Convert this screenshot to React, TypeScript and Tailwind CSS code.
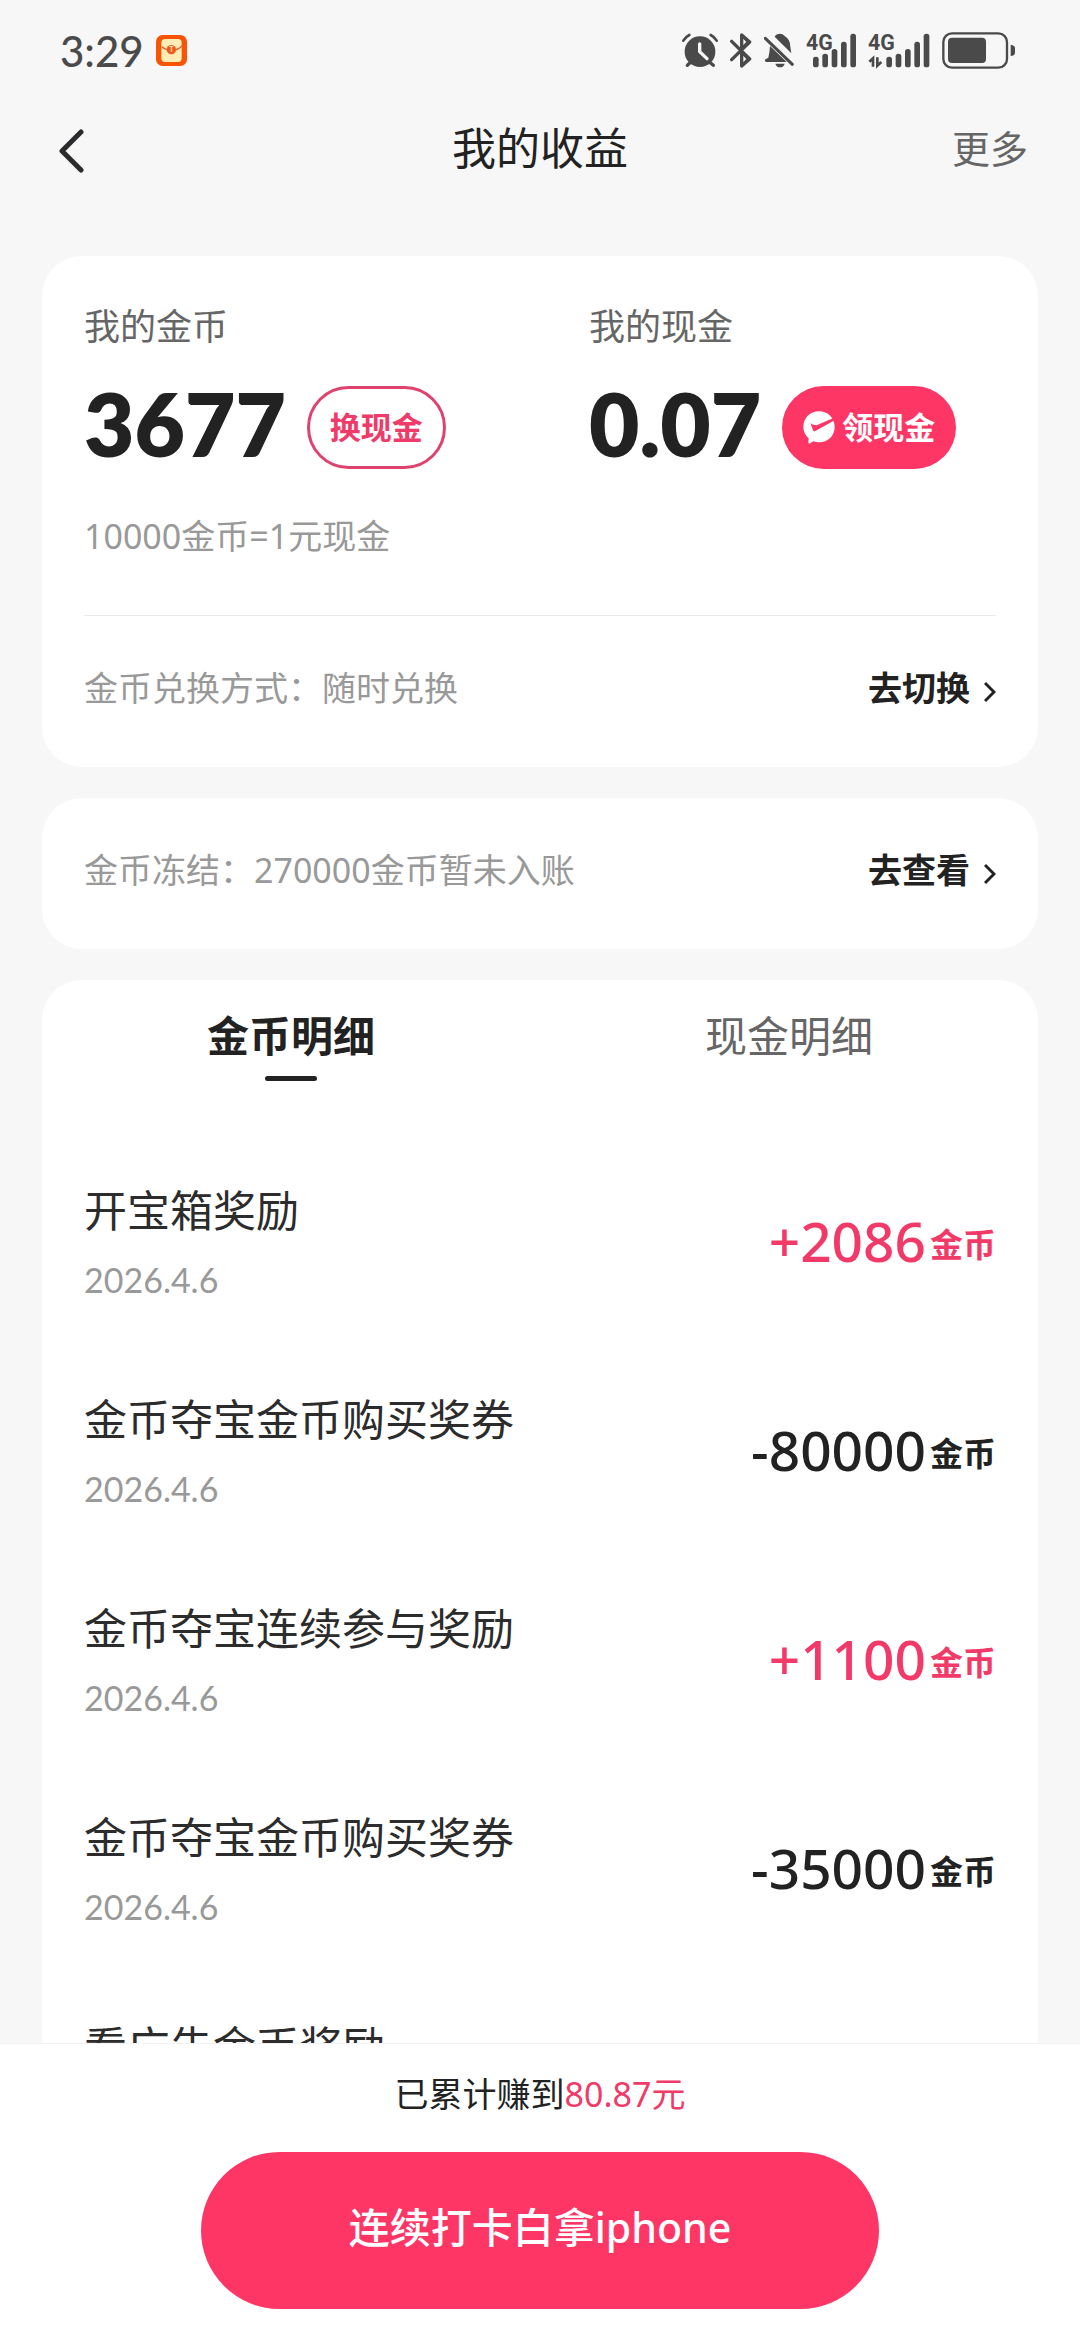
import React, { useState } from "react";

type Entry = { title: string; date?: string; amount?: string; gain?: boolean };

const ENTRIES: Entry[] = [
  { title: "开宝箱奖励", date: "2026.4.6", amount: "+2086", gain: true },
  { title: "金币夺宝金币购买奖券", date: "2026.4.6", amount: "-80000" },
  { title: "金币夺宝连续参与奖励", date: "2026.4.6", amount: "+1100", gain: true },
  { title: "金币夺宝金币购买奖券", date: "2026.4.6", amount: "-35000" },
  { title: "看广告金币奖励" },
];

const BAR_TOPS = [170, 161, 147, 125, 101];

function RedPacketIcon() {
  return (
    <svg className="h-[31px] w-[31px]" viewBox="465 105 93 93" aria-hidden="true">
      <rect x="465" y="105" width="93" height="93" rx="20" fill="#f95305" />
      <rect x="481" y="117" width="61" height="69" rx="11" fill="#ffedb5" />
      <path d="M482 140 Q496 151 511 151 Q530 151 544 137" fill="none" stroke="#e8602c" strokeWidth="4" />
      <circle cx="511" cy="149" r="14" fill="#ee5a1c" />
      <text x="511" y="157" textAnchor="middle" fontSize="22" fontWeight="700" fill="#ffedb5" fontFamily="Lato, sans-serif">
        T
      </text>
    </svg>
  );
}

function AlarmIcon() {
  return (
    <svg className="h-[37px] w-[36px]" viewBox="66 96 108 111" fill="none" stroke="#4a4a4a" strokeLinecap="round" aria-hidden="true">
      <circle cx="120" cy="155" r="46" fill="#4a4a4a" stroke="none" />
      <path d="M70 122 Q76 111 88 105 M152 105 Q164 111 170 122" strokeWidth="8" />
      <path d="M92 186 L82 196 M148 186 L160 196" strokeWidth="10" />
      <path d="M119 132 V155 L141 176" stroke="#f7f7f7" strokeWidth="10" strokeLinejoin="round" />
    </svg>
  );
}

function BluetoothIcon() {
  return (
    <svg className="h-[37px] w-[22px]" viewBox="210 96 66 111" fill="none" stroke="#4a4a4a" strokeWidth="10" strokeLinecap="round" strokeLinejoin="round" aria-hidden="true">
      <path d="M215 124 L269 177 L245 198 V105 L269 126 L215 179" />
      <path d="M250 112 L262 126 L250 138 M250 164 L262 177 L250 190" strokeWidth="5" />
    </svg>
  );
}

function MutedBellIcon() {
  return (
    <svg className="h-[37px] w-[30px]" viewBox="312 96 90 111" fill="#4a4a4a" aria-hidden="true">
      <path d="M330 138 L380 186 H318 Q312 183 316 178 L325 173 Q329 158 330 138 Z" />
      <path d="M344 110 Q348 101 360 101 Q368 101 374 108 Q391 118 391 140 L394 160 Z" />
      <path d="M346 191 H374 Q371 202 360 202 Q349 202 346 191 Z" />
      <path d="M316 115 L397 193" stroke="#4a4a4a" strokeWidth="9" strokeLinecap="round" />
    </svg>
  );
}

function SignalIcon({ active = false }: { active?: boolean }) {
  const start = active ? 63 : 29;
  return (
    <svg className={active ? "h-[37px] w-[62px] overflow-visible" : "h-[37px] w-[50px] overflow-visible"} viewBox={active ? "0 96 186 111" : "0 96 150 111"} aria-hidden="true">
      <text x="0" y="150" fontSize="64" fontWeight="700" fill="#4a4a4a" fontFamily="'Liberation Sans Narrow', Roboto, sans-serif">
        4G
      </text>
      {BAR_TOPS.map((top, i) => (
        <rect key={top} x={start - 8 + i * 28} y={top} width="17" height={202 - top} rx="8" fill="#4a4a4a" />
      ))}
      {active && <path d="M15 200 V175 L4 185 M28 172 V197 L40 186" fill="none" stroke="#4a4a4a" strokeWidth="8" />}
    </svg>
  );
}

function BatteryIcon() {
  return (
    <svg className="h-[37px] w-[73px]" viewBox="846 96 219 111" aria-hidden="true">
      <rect x="850" y="100" width="191" height="103" rx="26" fill="none" stroke="#4a4a4a" strokeWidth="7" />
      <rect x="864" y="113" width="114" height="76" rx="12" fill="#4a4a4a" />
      <path d="M1052 134 Q1065 136 1065 144 V158 Q1065 166 1052 168 Z" fill="#4a4a4a" />
    </svg>
  );
}

function WechatPayIcon() {
  return (
    <svg className="h-[33px] w-[33px]" viewBox="766 489 99 99" aria-hidden="true">
      <path d="M814 490 C841 490 861 510 861 537 C861 563 841 583 814 583 C808 583 802 582 797 580 L785 587 Q782 587 782 583 L783 571 C773 562 767 551 767 537 C767 510 787 490 814 490 Z" fill="#fff" />
      <path d="M788 525 Q794 531 801 531 L807 532 L864 507 L862 516 L803 549 Q798 552 796 547 Z" fill="#fe3666" />
    </svg>
  );
}

function Chevron() {
  return (
    <svg className="h-[22px] w-[12px]" viewBox="0 0 12 22" fill="none" stroke="#222" strokeWidth="3" aria-hidden="true">
      <path d="M1 2 L10 11 L1 20" />
    </svg>
  );
}

function InfoRow({ text, action }: { text: string; action: string }) {
  return (
    <div className="flex h-[151px] items-center justify-between">
      <p className="pb-2 text-[34px] leading-[60px] text-[#999]">{text}</p>
      <button type="button" className="flex items-center gap-[14px] text-[34px] leading-[60px] font-bold text-[#222]">
        <span className="pb-2">{action}</span>
        <Chevron />
      </button>
    </div>
  );
}

function Tab({ label, selected, onSelect }: { label: string; selected: boolean; onSelect: () => void }) {
  return (
    <button
      type="button"
      role="tab"
      aria-selected={selected}
      onClick={onSelect}
      className={
        selected
          ? "flex flex-col items-center gap-[10px] text-[42px] leading-[60px] font-bold text-[#222]"
          : "flex flex-col items-center gap-[10px] text-[42px] leading-[60px] text-[#666]"
      }
    >
      {label}
      {selected && <span className="h-[5px] w-[52px] rounded-full bg-[#222]" />}
    </button>
  );
}

export default function App() {
  const [tab, setTab] = useState(0);

  return (
    <div className="flex h-screen flex-col overflow-hidden bg-[#f7f7f7] font-['Noto_Sans','Noto_Sans_CJK_SC',sans-serif] text-[#222]">
      <div className="flex h-[101px] shrink-0 items-center justify-between pr-[65px] pl-[60px]">
        <div className="flex items-center gap-3">
          <span className="font-['Lato','Noto_Sans_CJK_SC',sans-serif] text-[42px] leading-[60px] font-medium text-[#4a4a4a]">3:29</span>
          <RedPacketIcon />
        </div>
        <div className="flex items-center gap-3">
          <AlarmIcon />
          <BluetoothIcon />
          <MutedBellIcon />
          <SignalIcon />
          <SignalIcon active />
          <BatteryIcon />
        </div>
      </div>

      <header className="grid h-[99px] shrink-0 grid-cols-3 items-center px-[52px]">
        <button type="button" aria-label="返回" className="justify-self-start pl-1.5">
          <svg className="h-[44px] w-[26px]" viewBox="0 0 26 44" fill="none" stroke="#2b2b2d" strokeWidth="5" strokeLinecap="round" strokeLinejoin="round">
            <path d="M23 3 L4 22 L23 41" />
          </svg>
        </button>
        <h1 className="pb-1.5 text-center text-[44px] leading-[60px]">我的收益</h1>
        <button type="button" className="justify-self-end pb-1.5 text-[38px] leading-[60px] text-[#666]">
          更多
        </button>
      </header>

      <main className="flex min-h-0 flex-1 flex-col gap-[31px] overflow-hidden px-[42px] pt-14">
        <section className="shrink-0 rounded-[40px] bg-white px-[42px] pt-[42px]">
          <div className="grid grid-cols-[505fr_407fr]">
            <div>
              <h2 className="text-[36px] leading-[58px] text-[#666]">我的金币</h2>
              <div className="mt-[30px] flex items-center gap-[21px]">
                <span className="pb-2 font-['Lato','Noto_Sans_CJK_SC',sans-serif] text-[87px] leading-[75px] font-extrabold">3677</span>
                <button type="button" className="h-[83px] rounded-full border-[3px] border-[#e0426e] px-5 text-[31px] font-bold text-[#ef3b69]">
                  换现金
                </button>
              </div>
            </div>
            <div>
              <h2 className="text-[36px] leading-[58px] text-[#666]">我的现金</h2>
              <div className="mt-[30px] flex items-center gap-[21px]">
                <span className="pb-2 font-['Lato','Noto_Sans_CJK_SC',sans-serif] text-[87px] leading-[75px] font-extrabold">0.07</span>
                <button type="button" className="flex h-[83px] items-center gap-[6px] rounded-full bg-[#fe3666] px-[21px] text-[31px] font-bold text-white">
                  <WechatPayIcon />
                  领现金
                </button>
              </div>
            </div>
          </div>
          <p className="mt-[37px] text-[34px] leading-[60px] text-[#999]">10000金币=1元现金</p>
          <hr className="mt-[49px] border-[#ebebeb]" />
          <InfoRow text="金币兑换方式：随时兑换" action="去切换" />
        </section>

        <section className="shrink-0 rounded-[40px] bg-white px-[42px]">
          <InfoRow text="金币冻结：270000金币暂未入账" action="去查看" />
        </section>

        <section className="shrink-0 rounded-t-[40px] bg-white">
          <div role="tablist" className="grid h-[156px] grid-cols-2 items-start pt-[26px]">
            <Tab label="金币明细" selected={tab === 0} onSelect={() => setTab(0)} />
            <Tab label="现金明细" selected={tab === 1} onSelect={() => setTab(1)} />
          </div>
          <ul className="px-[42px]">
            {ENTRIES.map((entry, i) => (
              <li key={i} className="flex items-center justify-between py-[45px]">
                <div className="flex flex-col gap-[19px]">
                  <span className="text-[43px] leading-[60px] text-[#2c2c2c]">{entry.title}</span>
                  {entry.date && (
                    <span className="font-['Lato','Noto_Sans_CJK_SC',sans-serif] text-[34px] leading-[40px] text-[#999]">{entry.date}</span>
                  )}
                </div>
                {entry.amount && (
                  <div className={entry.gain ? "flex items-center gap-1 text-[#f23a69]" : "flex items-center gap-1 text-[#222]"}>
                    <span className="text-[55px] leading-[60px] font-medium">{entry.amount}</span>
                    <span className="pt-2 text-[33px] leading-[60px] font-bold">金币</span>
                  </div>
                )}
              </li>
            ))}
          </ul>
        </section>
      </main>

      <footer className="flex shrink-0 flex-col border-t border-[#f2f2f2] bg-white pt-5 pb-[31px]">
        <p className="text-center text-[34px] leading-[60px]">
          已累计赚到<span className="text-[#ef3b69]">80.87元</span>
        </p>
        <button type="button" className="mx-[201px] mt-7 h-[157px] rounded-full bg-[#fe3666] pb-1.5 text-[41px] font-medium text-white">
          连续打卡白拿iphone
        </button>
      </footer>
    </div>
  );
}
